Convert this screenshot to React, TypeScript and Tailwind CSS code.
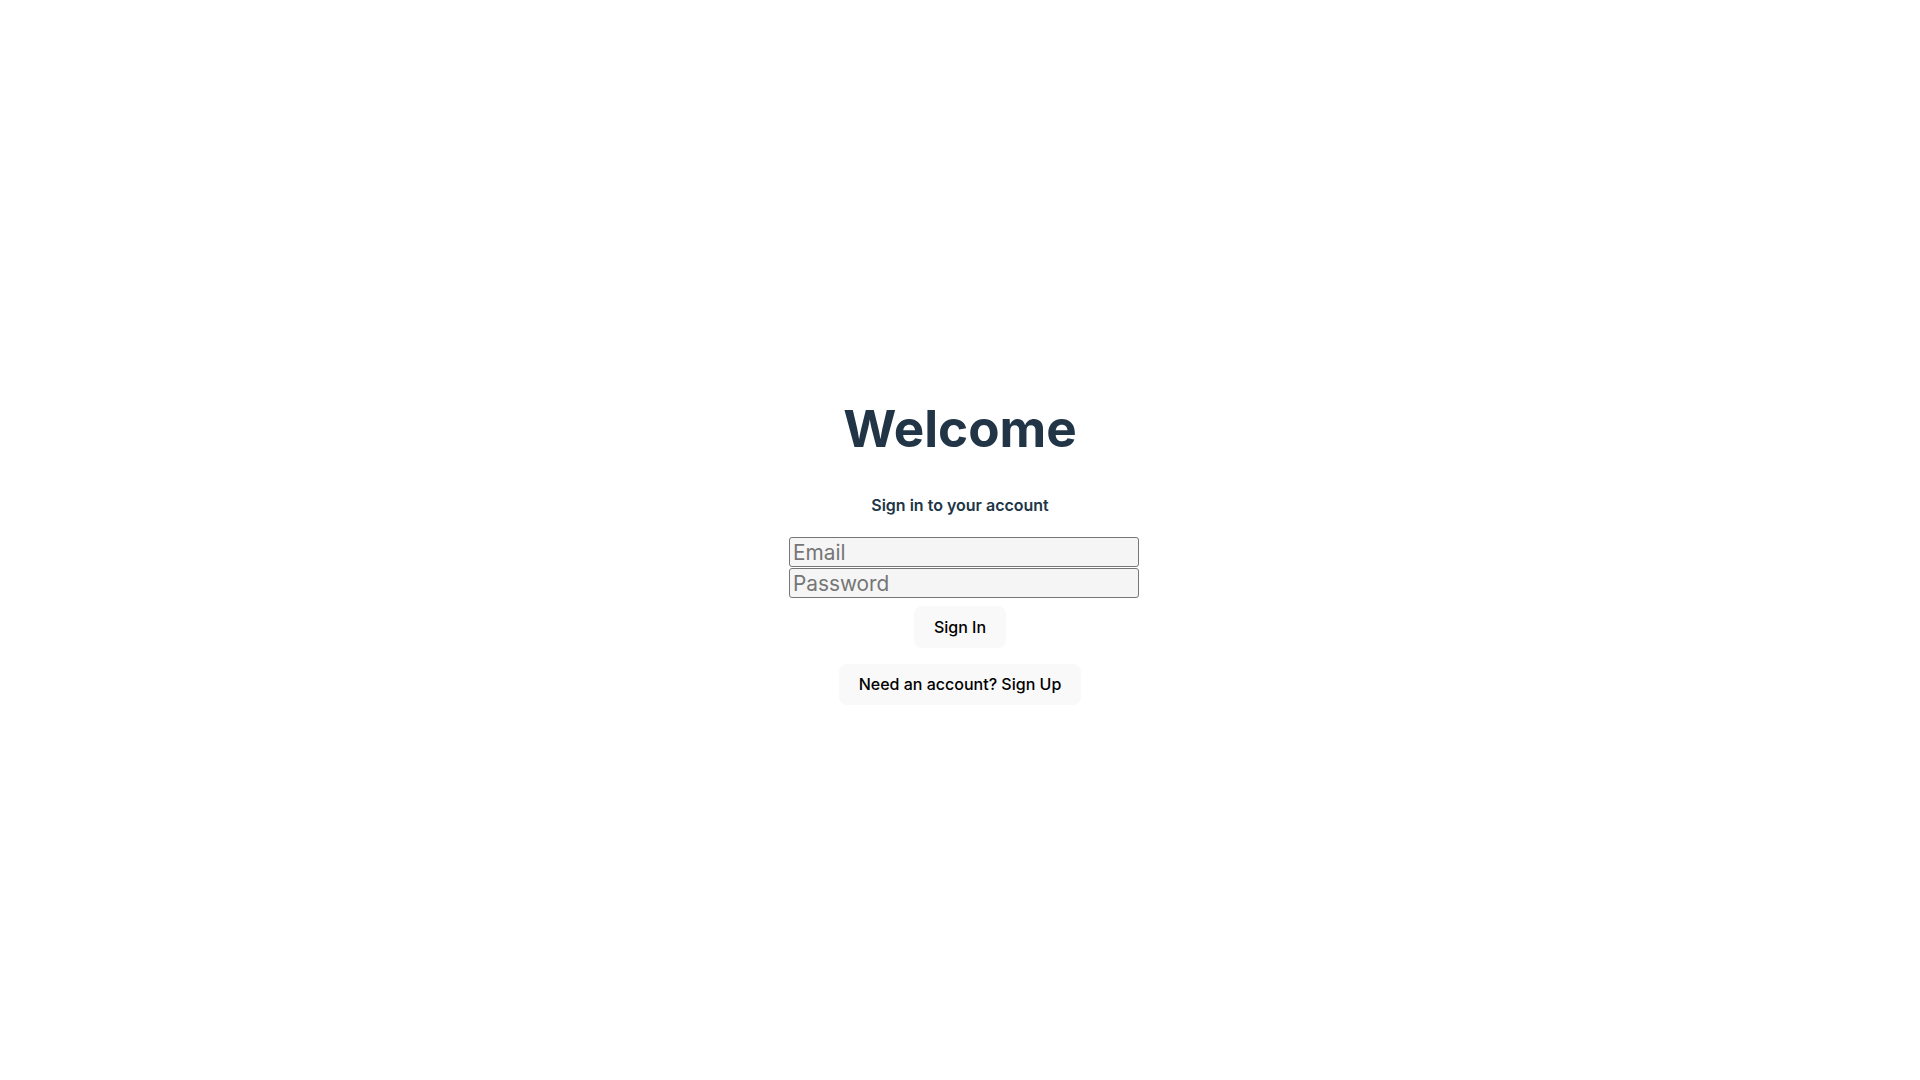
import { useState } from 'react'

export default function App() {
  const [email, setEmail] = useState('')
  const [password, setPassword] = useState('')

  return (
    <div className="min-h-screen w-full bg-white flex items-center justify-center font-['Inter','Liberation_Sans',sans-serif] text-[#213547]">
      <div className="flex flex-col items-center mt-[25px]">
        {/* Heading */}
        <h1 className="text-[51.2px] leading-[1.1] font-bold">Welcome</h1>
        <p className="mt-[37px] text-base leading-6 font-semibold">Sign in to your account</p>

        {/* Form */}
        <form
          className="mt-[20px] flex flex-col items-center"
          onSubmit={(e) => e.preventDefault()}
        >
          <div className="w-[358px] pl-2 flex flex-col gap-px">
            <input
              type="email"
              placeholder="Email"
              value={email}
              onChange={(e) => setEmail(e.target.value)}
              className="w-[350px] h-[30px] px-[3px] rounded-[3px] border border-[#767676] bg-[#f5f5f5] text-[20.8px] text-black placeholder-[#757575] focus:outline-none"
            />
            <input
              type="password"
              placeholder="Password"
              value={password}
              onChange={(e) => setPassword(e.target.value)}
              className="w-[350px] h-[30px] px-[3px] rounded-[3px] border border-[#767676] bg-[#f5f5f5] text-[20.8px] text-black placeholder-[#757575] focus:outline-none"
            />
          </div>
          <button
            type="submit"
            className="mt-[8px] px-[19px] py-[9.6px] rounded-lg border border-transparent bg-[#f9f9f9] text-base leading-[normal] font-medium text-black hover:border-[#646cff] transition"
          >
            Sign In
          </button>
        </form>

        {/* Switch mode */}
        <button className="mt-4 px-[19px] py-[9.6px] rounded-lg border border-transparent bg-[#f9f9f9] text-base leading-[normal] font-medium text-black hover:border-[#646cff] transition">
          Need an account? Sign Up
        </button>
      </div>
    </div>
  )
}
